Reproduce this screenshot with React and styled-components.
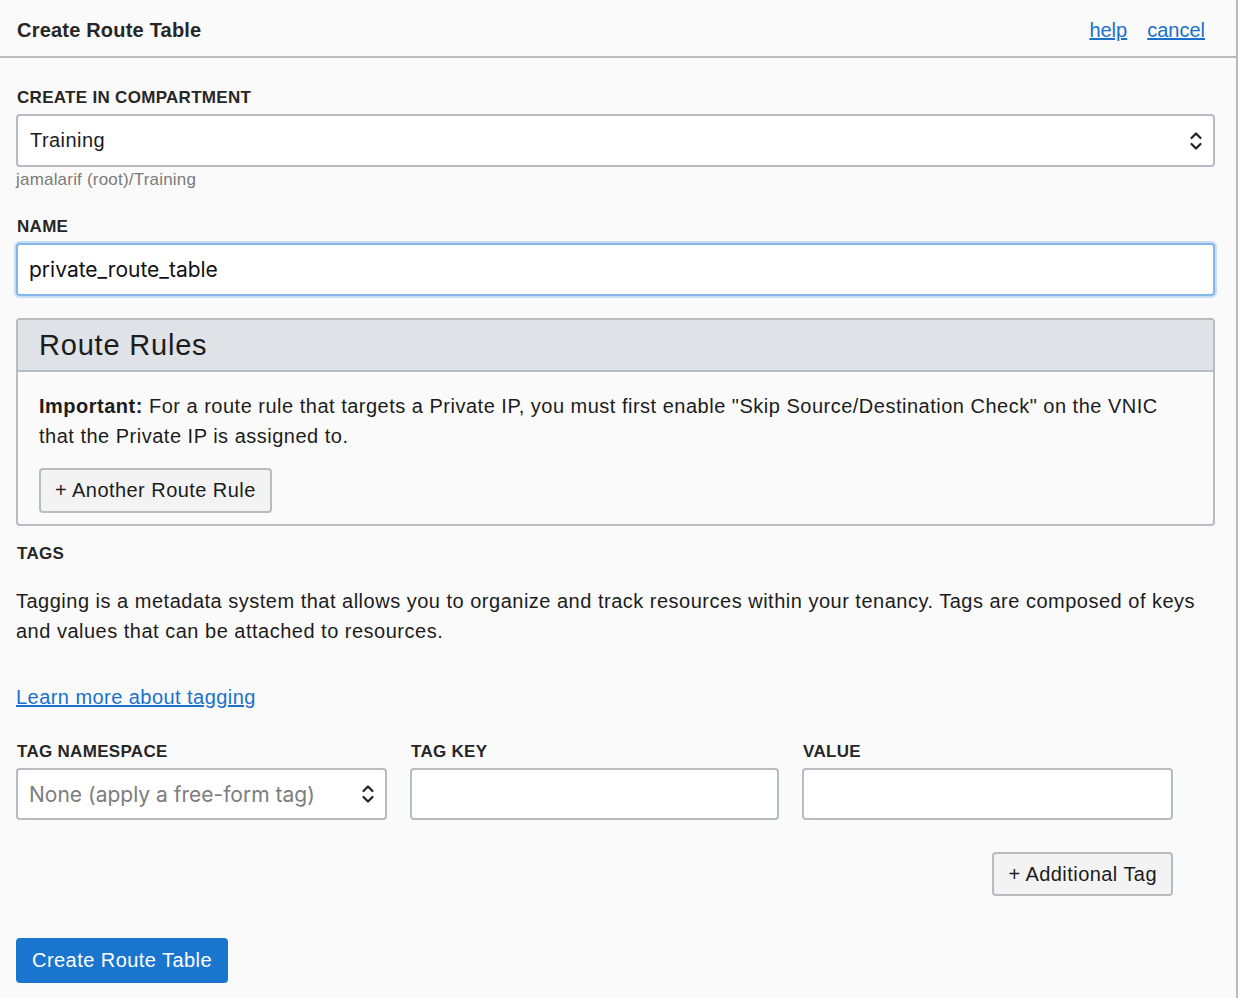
import React from 'react'
import styled, { createGlobalStyle } from 'styled-components'

const GlobalStyle = createGlobalStyle`
  html, body {
    margin: 0;
    padding: 0;
    background: #fafafa;
  }
  body {
    font-family: "Liberation Sans", Arial, sans-serif;
    color: #161616;
  }
`

const Panel = styled.div`
  width: 1236px;
  min-height: 998px;
  border-right: 2px solid #b7bbc2;
  background: #fafafa;
`

const Header = styled.div`
  height: 56px;
  display: flex;
  align-items: center;
  justify-content: space-between;
  padding: 0 31px 0 17px;
  border-bottom: 2px solid #b7bbc2;
`

const Title = styled.h1`
  margin: 0;
  font-size: 20px;
  font-weight: bold;
  letter-spacing: 0.2px;
  color: #262626;
  padding-top: 5px;
`

const HeaderLinks = styled.div`
  display: flex;
  gap: 20px;
  padding-top: 5px;
`

const Link = styled.a`
  color: #1a70cc;
  font-size: 20px;
  letter-spacing: ${p => p.spacing || 0}px;
  text-decoration: underline;
  cursor: pointer;
`

const Body = styled.div`
  padding: 30px 21px 0 16px;
  display: flex;
  flex-direction: column;
`

const Label = styled.label`
  display: block;
  font-size: 17px;
  font-weight: bold;
  letter-spacing: 0.3px;
  color: #262626;
  margin: 0 0 6px 1px;
`

const Field = styled.div`
  margin-bottom: ${p => p.mb || 0}px;
`

const SelectBox = styled.div`
  height: ${p => p.h || 52}px;
  box-sizing: border-box;
  border: 2px solid #b7bbc2;
  border-radius: 4px;
  background: #fff;
  display: flex;
  align-items: center;
  justify-content: space-between;
  padding: 0 10px 0 ${p => (p.muted ? 11 : 12)}px;
  font-family: ${p => (p.muted ? 'Inter, "Open Sans", sans-serif' : '"Liberation Sans", Arial, sans-serif')};
  font-size: ${p => (p.muted ? 21 : 20)}px;
  letter-spacing: ${p => (p.muted ? 0 : 0.45)}px;
  color: ${p => (p.muted ? '#7d7d7d' : '#1c1c1c')};
`

const TextInput = styled.div`
  height: ${p => p.h || 52}px;
  box-sizing: border-box;
  border: 2px solid ${p => (p.focus ? '#86b5ea' : '#b7bbc2')};
  box-shadow: ${p => (p.focus ? '0 0 0 2px #c6ddf7' : 'none')};
  border-radius: 4px;
  background: #fff;
  display: flex;
  align-items: center;
  padding: 0 11px;
  font-family: Inter, "Open Sans", sans-serif;
  font-size: 21px;
  color: #111;
`

const Helper = styled.div`
  font-size: 17px;
  letter-spacing: 0.2px;
  color: #7a7a7a;
  margin-top: 3px;
`

const Box = styled.section`
  border: 2px solid #b7bbc2;
  border-radius: 4px;
  margin-top: 22px;
  background: #fafafa;
`

const BoxHeader = styled.div`
  background: #dfe2e6;
  border-bottom: 2px solid #b7bbc2;
  height: 50px;
  display: flex;
  align-items: center;
  padding: 0 21px;
  font-size: 29px;
  letter-spacing: 0.8px;
  color: #1c1c1c;
`

const BoxBody = styled.div`
  padding: 19px 21px 11px;
`

const Para = styled.p`
  margin: 0;
  font-size: 20px;
  line-height: 30px;
  letter-spacing: 0.5px;
  color: #1c1c1c;
`

const ButtonRow = styled.div`
  margin-top: ${p => p.mt || 0}px;
  display: flex;
  justify-content: ${p => (p.end ? 'flex-end' : 'flex-start')};
  width: ${p => (p.end ? '1157px' : 'auto')};
`

const Button = styled.button`
  font-family: "Liberation Sans", Arial, sans-serif;
  font-size: 20px;
  letter-spacing: 0.45px;
  color: #1c1c1c;
  background: #f3f3f4;
  border: 2px solid #b7bbc2;
  border-radius: 4px;
  height: ${p => p.h || 45}px;
  padding: 0 14px;
  cursor: pointer;
`

const PrimaryButton = styled.button`
  font-family: "Liberation Sans", Arial, sans-serif;
  font-size: 20px;
  letter-spacing: 0.45px;
  color: #fff;
  background: #1a75cf;
  border: none;
  border-radius: 4px;
  height: 45px;
  padding: 0 16px;
  cursor: pointer;
`

const TagGrid = styled.div`
  display: grid;
  grid-template-columns: 371px 369px 371px;
  column-gap: 23px;
  margin-top: 33px;
`

const Chevrons = () => (
  <svg width="14" height="22" viewBox="0 0 14 22" fill="none" stroke="#222" strokeWidth="2.2" strokeLinecap="round" strokeLinejoin="round">
    <path d="M2.5 8 L7 3.5 L11.5 8" />
    <path d="M2.5 14 L7 18.5 L11.5 14" />
  </svg>
)

export default function App() {
  return (
    <>
      <GlobalStyle />
      <Panel>
        <Header>
          <Title>Create Route Table</Title>
          <HeaderLinks>
            <Link>help</Link>
            <Link>cancel</Link>
          </HeaderLinks>
        </Header>
        <Body>
          <Field mb={27}>
            <Label>CREATE IN COMPARTMENT</Label>
            <SelectBox h={53}>
              <span>Training</span>
              <Chevrons />
            </SelectBox>
            <Helper>jamalarif (root)/Training</Helper>
          </Field>
          <Field>
            <Label>NAME</Label>
            <TextInput focus h={53}>private_route_table</TextInput>
          </Field>
          <Box>
            <BoxHeader>Route Rules</BoxHeader>
            <BoxBody>
              <Para>
                <strong>Important:</strong> For a route rule that targets a Private IP, you must first enable
                "Skip Source/Destination Check" on the VNIC that the Private IP is assigned to.
              </Para>
              <ButtonRow mt={17}>
                <Button>+ Another Route Rule</Button>
              </ButtonRow>
            </BoxBody>
          </Box>
          <Label style={{ marginTop: 18, marginBottom: 22 }}>TAGS</Label>
          <Para>
            Tagging is a metadata system that allows you to organize and track resources within your tenancy. Tags are
            composed of keys and values that can be attached to resources.
          </Para>
          <div style={{ marginTop: 40 }}>
            <Link spacing={0.45}>Learn more about tagging</Link>
          </div>
          <TagGrid>
            <Field>
              <Label>TAG NAMESPACE</Label>
              <SelectBox muted>
                <span>None (apply a free-form tag)</span>
                <Chevrons />
              </SelectBox>
            </Field>
            <Field>
              <Label>TAG KEY</Label>
              <TextInput />
            </Field>
            <Field>
              <Label>VALUE</Label>
              <TextInput />
            </Field>
          </TagGrid>
          <ButtonRow end mt={32}>
            <Button h={44}>+ Additional Tag</Button>
          </ButtonRow>
          <ButtonRow mt={42}>
            <PrimaryButton>Create Route Table</PrimaryButton>
          </ButtonRow>
        </Body>
      </Panel>
    </>
  )
}
